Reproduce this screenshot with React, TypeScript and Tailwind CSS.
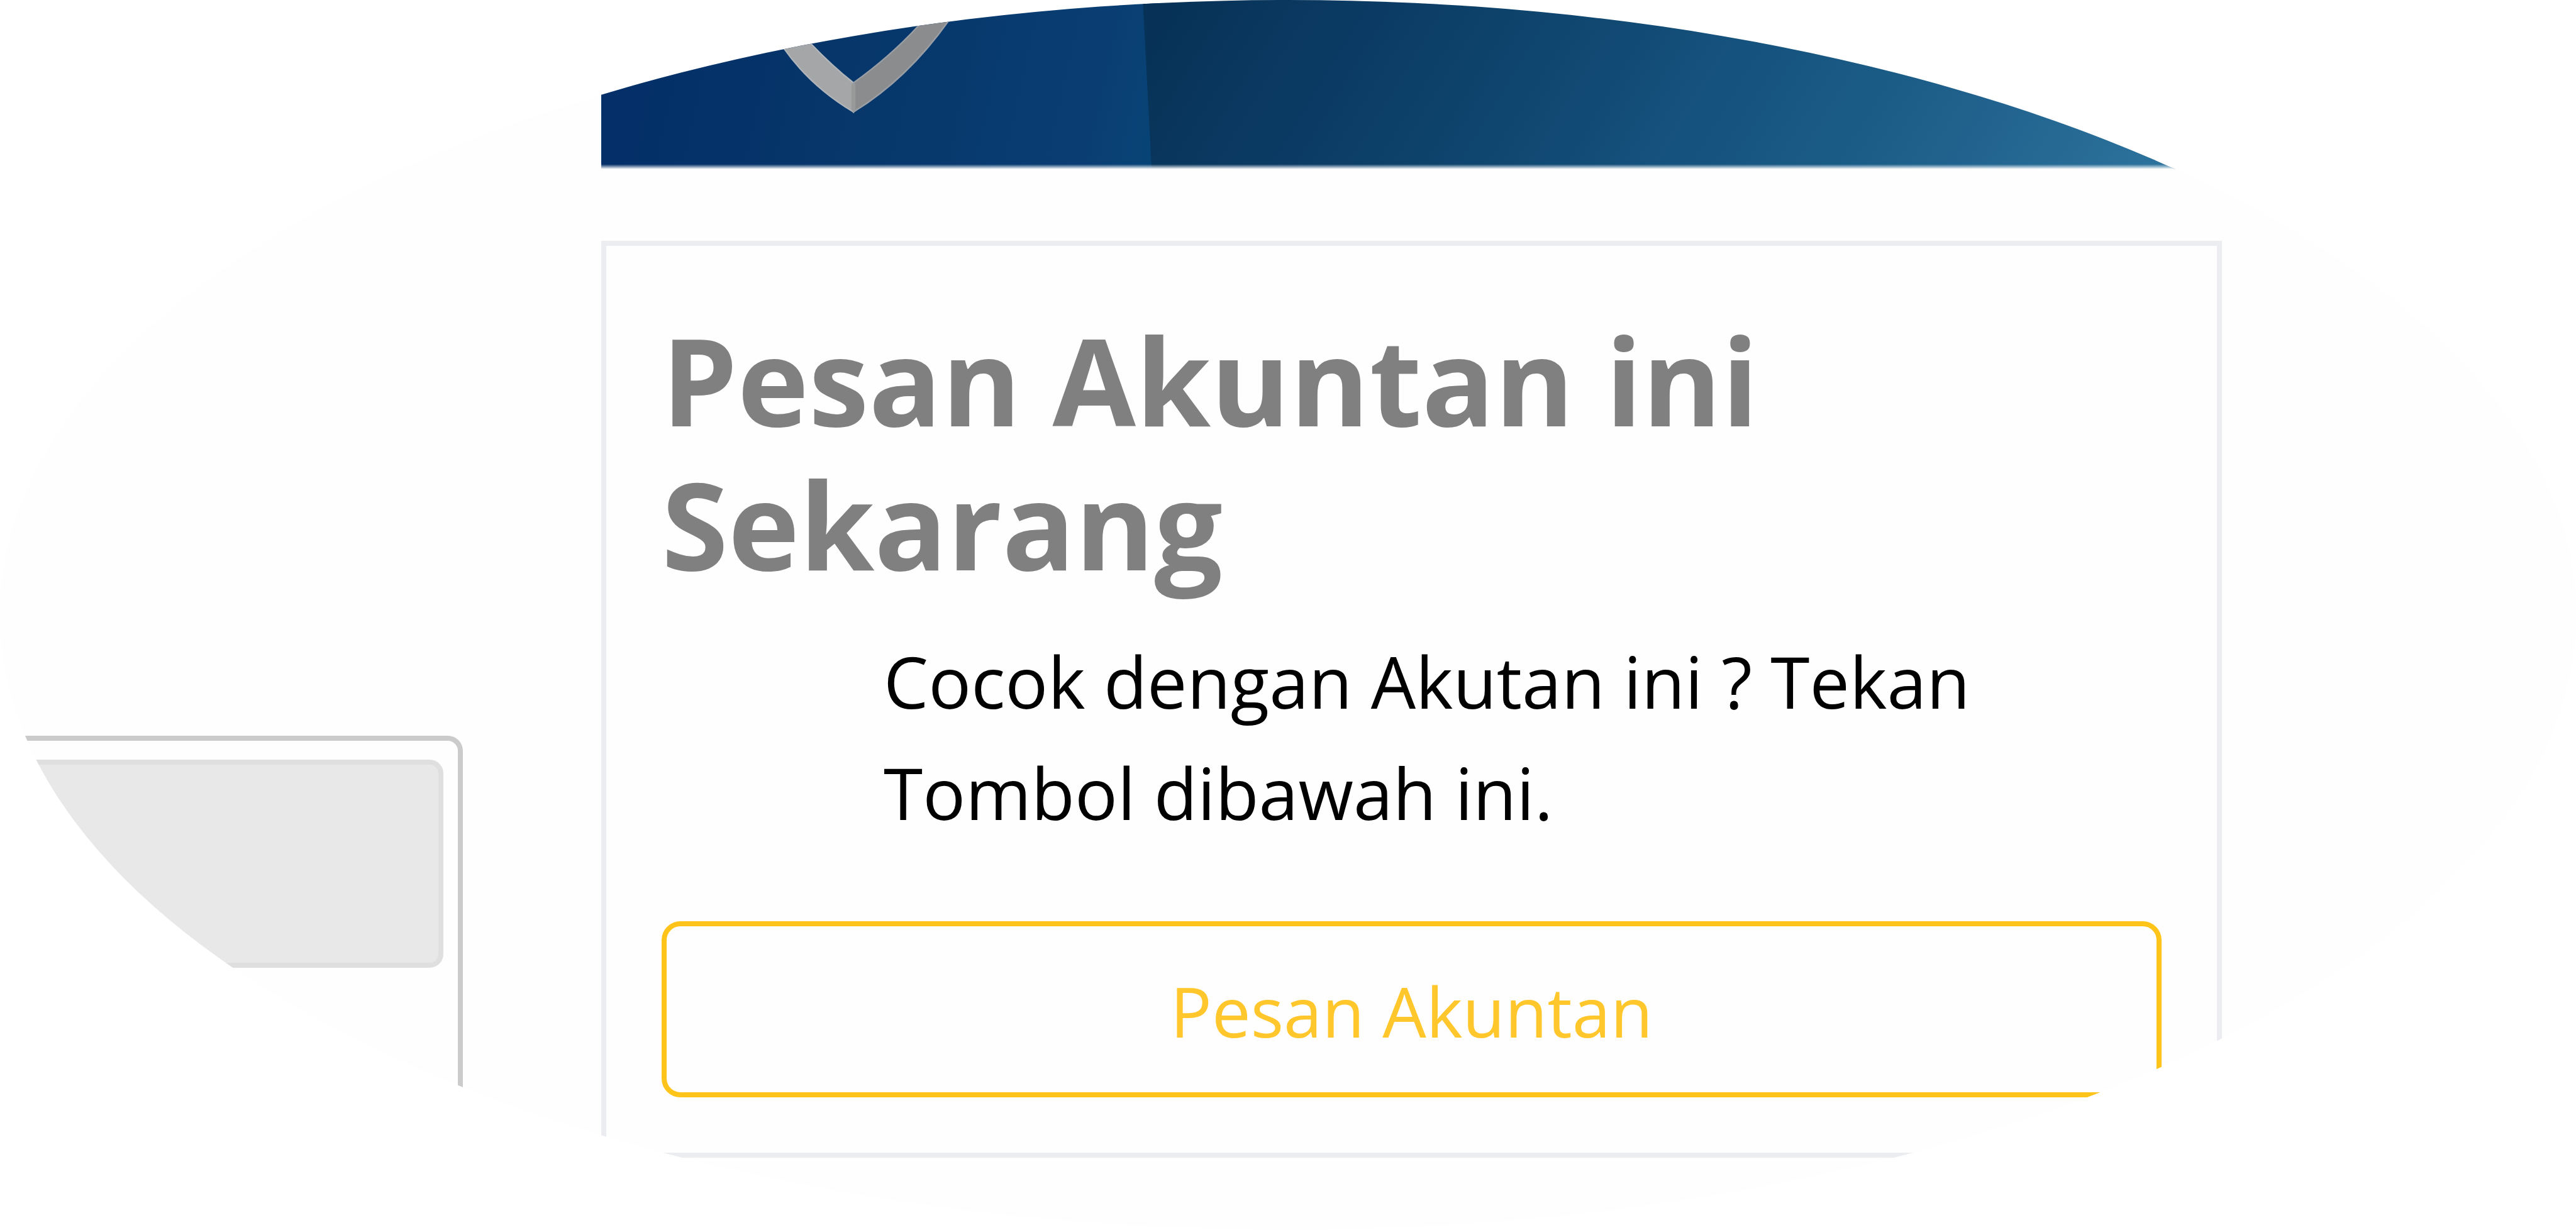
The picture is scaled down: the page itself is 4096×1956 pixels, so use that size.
function Banner() {
  return (
    <svg
      className="block h-[269px] w-full"
      viewBox="1218 0 3283 343"
      preserveAspectRatio="none"
      aria-hidden="true"
    >
      <defs>
        <linearGradient id="left" gradientUnits="userSpaceOnUse" x1="1218" y1="0" x2="2330" y2="250">
          <stop offset="0" stopColor="#042e68" />
          <stop offset="0.45" stopColor="#06366a" />
          <stop offset="0.9" stopColor="#0a3e73" />
          <stop offset="1" stopColor="#084376" />
        </linearGradient>
        <linearGradient id="right" gradientUnits="userSpaceOnUse" x1="2320" y1="0" x2="3991" y2="1015">
          <stop offset="0" stopColor="#073156" />
          <stop offset="0.21" stopColor="#0b3b64" />
          <stop offset="0.386" stopColor="#0f466f" />
          <stop offset="0.52" stopColor="#14507b" />
          <stop offset="0.69" stopColor="#1a5b86" />
          <stop offset="0.82" stopColor="#22648f" />
          <stop offset="1" stopColor="#2d739d" />
        </linearGradient>
        <linearGradient id="edge" x1="0" y1="0" x2="0" y2="1">
          <stop offset="0" stopColor="#fefefe" stopOpacity="0" />
          <stop offset="1" stopColor="#fefefe" />
        </linearGradient>
      </defs>
      <rect x="1218" y="0" width="1130" height="343" fill="url(#left)" />
      <path d="M2315 0 L4501 0 L4501 343 L2333 343 Z" fill="url(#right)" />
      <path
        d="M1555 50 L1588 98 Q1642 175 1729 227 L1729 168 Q1687 135 1642 88 L1608 50 Z"
        fill="#a5a6a7"
        stroke="#b0b5ba"
        strokeWidth="3"
      />
      <path
        d="M1729 227 Q1838 160 1921 43 L1951 0 L1902 0 L1860 53 Q1803 115 1729 168 Z"
        fill="#8b8c8e"
        stroke="#999ea5"
        strokeWidth="3"
      />
      <path d="M1729 170 L1729 224" stroke="#989999" strokeWidth="8" />
      <rect x="1218" y="333" width="3283" height="10" fill="url(#edge)" />
    </svg>
  );
}

function BookingCard() {
  return (
    <section className="border-8 border-[#ebedf0] px-[88px] pt-[98px] pb-[88px]">
      <h2 className="text-[192px] leading-[229px] font-bold text-[#808080]">
        Pesan Akuntan ini Sekarang
      </h2>
      <p className="mt-[48px] pl-[353px] text-[113px] leading-[177px] text-black">
        Cocok dengan Akutan ini ? Tekan Tombol dibawah ini.
      </p>
      <button
        type="button"
        className="mt-[116px] block h-[280px] w-full rounded-[30px] border-8 border-[#ffc41a] pt-[4px] text-[110px] leading-[177px] text-[#ffc72c]"
      >
        Pesan Akuntan
      </button>
    </section>
  );
}

export default function App() {
  return (
    <div className="min-h-screen bg-white">
      <div className="grid min-h-screen grid-cols-[736px_1fr] gap-[220px] overflow-hidden bg-[#fefefe] pr-[563px] font-['Open_Sans',sans-serif] [clip-path:ellipse(50%_50%)]">
        <aside className="flex flex-col justify-end">
          <div className="h-[786px] rounded-tr-[24px] border-t-8 border-r-8 border-[#cbcbcb] pt-[30px] pr-[23px]">
            <div className="h-[331px] rounded-r-[22px] border-8 border-[#dfdfdf] bg-[#e8e8e8]" />
          </div>
        </aside>
        <main>
          <Banner />
          <div className="mt-[114px]">
            <BookingCard />
          </div>
        </main>
      </div>
    </div>
  );
}
